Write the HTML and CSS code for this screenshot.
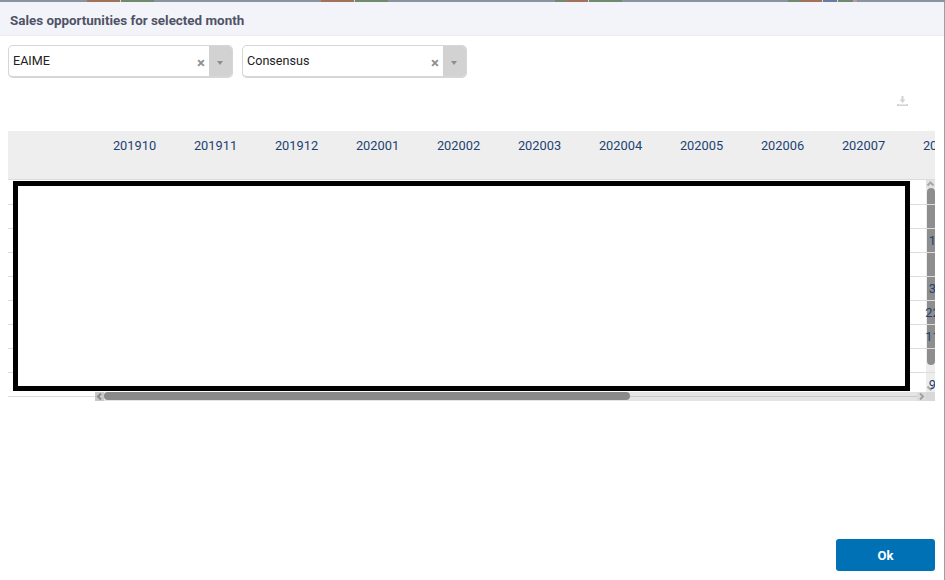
FILE: index.html
```html
<!DOCTYPE html>
<html lang="en">
<head>
<meta charset="utf-8">
<title>Sales opportunities</title>
<link rel="stylesheet" href="styles.css">
</head>
<body>
<div class="strip">
  <i class="sp w87"></i><i class="c1 w33"></i><i class="gap1"></i><i class="c2 w33"></i>
  <i class="sp w167"></i><i class="c1 w33"></i><i class="gap1"></i><i class="c2 w33"></i>
  <i class="sp w167"></i><i class="c2 w10"></i><i class="c1 w23"></i><i class="gap1"></i><i class="c2 w33"></i>
  <i class="sp w166"></i><i class="c2 w13"></i><i class="c1 w21"></i><i class="gap1"></i><i class="c3 w14"></i><i class="gap1"></i><i class="c2 w15"></i><i class="c4 w4"></i>
  <i class="sp grow"></i>
</div>
<main class="dialog">
  <header class="head">Sales opportunities for selected month</header>
  <section class="filters">
    <div class="select"><span class="value">EAIME</span><span class="clear">×</span><span class="arrow"></span></div>
    <div class="select"><span class="value">Consensus</span><span class="clear">×</span><span class="arrow"></span></div>
  </section>
  <div class="tools">
    <svg class="dl" width="11" height="10" viewBox="0 0 11 10"><path d="M4.5 0h2v3.5h2L5.5 7 2.500 3.500h2z" fill="#d0d2d6"/><path d="M0 8h1.500v0.500h8V8H11v2H0z" fill="#d0d2d6"/></svg>
  </div>
  <section class="table">
    <div class="row hdr">
      <div class="first"></div><div class="cell">201910</div><div class="cell">201911</div><div class="cell">201912</div><div class="cell">202001</div><div class="cell">202002</div><div class="cell">202003</div><div class="cell">202004</div><div class="cell">202005</div><div class="cell">202006</div><div class="cell">202007</div><div class="cell">202008</div>
    </div>
    <div class="body">
      <div class="row line"></div>
      <div class="row line"></div>
      <div class="row line"><div class="pad"></div><div class="cell">1,234</div></div>
      <div class="row line"></div>
      <div class="row line"><div class="pad"></div><div class="cell">3,120</div></div>
      <div class="row line"><div class="pad"></div><div class="cell">22,345</div></div>
      <div class="row line"><div class="pad"></div><div class="cell">11,234</div></div>
      <div class="row line"></div>
      <div class="row line"><div class="pad"></div><div class="cell">9,120</div></div>
    </div>
    <div class="vbar">
      <svg class="ar up" width="9" height="8" viewBox="0 0 9 8"><path d="M1.500 5.500 4.500 2.500 7.500 5.500" fill="none" stroke="#a8a8a8" stroke-width="2"/></svg>
      <div class="vthumb"></div>
      <svg class="ar down" width="9" height="8" viewBox="0 0 9 8"><path d="M1.500 2.500 4.500 5.500 7.500 2.500" fill="none" stroke="#a8a8a8" stroke-width="2"/></svg>
    </div>
    <div class="hbar">
      <svg class="har" width="9" height="9" viewBox="0 0 9 9"><path d="M6 1.500 3 4.500 6 7.500" fill="none" stroke="#8a8a8a" stroke-width="2"/></svg>
      <div class="hthumb"></div>
      <div class="hrest"></div>
      <svg class="har next" width="9" height="9" viewBox="0 0 9 9"><path d="M3 1.500 6 4.500 3 7.500" fill="none" stroke="#a0a0a0" stroke-width="2"/></svg>
      <div class="corner"></div>
    </div>
    <div class="redact"></div>
  </section>
  <footer class="foot"><button class="ok">Ok</button></footer>
</main>
</body>
</html>
```
FILE: styles.css
```css
* { box-sizing: border-box; }
html, body { margin: 0; padding: 0; height: 100%; background: #fff; overflow: hidden; }
body { font-family: Roboto, "Liberation Sans", sans-serif; width: 945px; height: 580px; position: relative; }
.strip { display: flex; height: 2px; background: #8b93a0; }
.strip i { display: block; height: 2px; }
.sp { background: #8b93a0; }
.c1 { background: #a2735c; }
.c2 { background: #6f8a6c; }
.c3 { background: #6a7aa0; }
.c4 { background: #b49aa4; }
.gap1 { width: 1px; background: #d8d8d8; }
.w87 { width: 87px; }
.w33 { width: 33px; }
.w167 { width: 167px; }
.w166 { width: 166px; }
.w10 { width: 10px; }
.w23 { width: 23px; }
.w13 { width: 13px; }
.w21 { width: 21px; }
.w14 { width: 14px; }
.w15 { width: 15px; }
.w4 { width: 4px; }
.grow { flex: 1; }
.dialog { height: 578px; width: 945px; border-right: 1px solid #9aa0aa; }
.head { height: 34px; background: #f3f4f9; border-bottom: 1px solid #ececf0; padding: 0 0 0 10px; font-size: 13.4px; font-weight: 700; line-height: 37px; color: #4f5366; }
.filters { display: flex; gap: 9px; padding: 9px 0 0 8px; }
.select { display: flex; align-items: stretch; width: 225px; height: 33px; border: 1px solid #d6d6d6; border-bottom-width: 2px; border-radius: 5px; overflow: hidden; font-size: 12.6px; color: #222; background: #fff; }
.value { flex: 1; padding: 7px 0 0 4px; line-height: 15px; }
.clear { width: 23px; text-align: left; padding: 9px 0 0 11px; font-size: 15px; font-weight: 700; line-height: 16px; color: #8f8f8f; }
.arrow { width: 23px; background: #d2d2d2; position: relative; }
.arrow::after { content: ""; position: absolute; left: 8px; top: 15px; border: 3.5px solid transparent; border-top: 4px solid #8d8d8d; border-bottom: 0; }
.tools { display: flex; justify-content: flex-end; height: 53px; padding: 18px 36px 0 0; }
.dl { display: block; }
.table { position: relative; margin-left: 8px; width: 927px; height: 270px; overflow: hidden; }
.row { display: flex; }
.hdr { height: 49px; background: #eeeeee; border-bottom: 1px solid #dcdcdc; position: relative; z-index: 2; }
.first { width: 86px; flex: none; }
.pad { width: 86px; flex: none; margin-left: 810px; }
.cell { width: 81px; flex: none; text-align: center; font-size: 12.8px; line-height: 29px; color: #1b4272; white-space: nowrap; }
.body { padding-top: 1px; position: relative; z-index: 2; }
.line { height: 24px; border-bottom: 1px solid #dcdcdc; }
.line .cell { line-height: 23px; }
.vbar { position: absolute; z-index: 1; left: 918px; top: 49px; width: 9px; height: 212px; background: #ededed; display: flex; flex-direction: column; align-items: center; }
.ar { display: block; flex: none; }
.up { background: #e2e2e2; }
.vthumb { width: 8px; height: 177px; border-radius: 4px; background: #8e8e8e; }
.down { margin-top: auto; }
.hbar { position: absolute; z-index: 3; left: 87px; top: 261px; width: 840px; height: 9px; display: flex; background: linear-gradient(#e4e4e4 0 4px, #c9c9c9 4px 5px, #e4e4e4 5px); }
.har { display: block; flex: none; background: #c8c8c8; }
.next { background: #dcdcdc; }
.corner { width: 9px; flex: none; background: #d8d8d8; }
.hthumb { width: 526px; height: 8px; border-radius: 4px; background: #8a8a8a; }
.hrest { flex: 1; }
.redact { position: absolute; z-index: 4; left: 5px; top: 50px; width: 897px; height: 210px; background: #fff; border: 5px solid #000; }
.foot { display: flex; justify-content: flex-end; padding: 138px 9px 0 0; }
.ok { width: 99px; height: 32px; border: 0; border-radius: 3px; background: #0071b5; color: #fff; font-family: Roboto, sans-serif; font-size: 13px; font-weight: 700; }
```
